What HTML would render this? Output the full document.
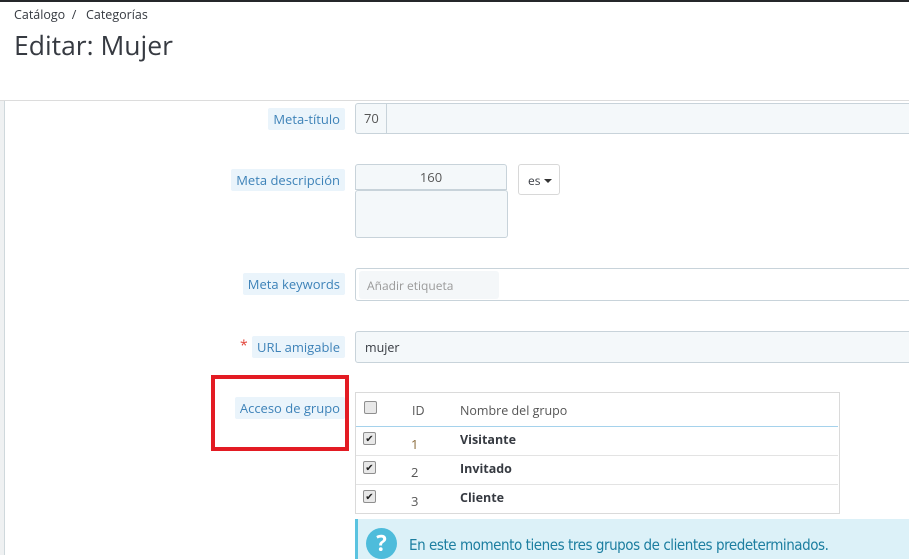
<!DOCTYPE html>
<html><head><meta charset="utf-8"><style>
*{box-sizing:border-box;margin:0;padding:0}
body{width:909px;height:555px;overflow:hidden;background:#fff;font-family:"Open Sans","Liberation Sans","DejaVu Sans",sans-serif;color:#363a41;position:relative;font-size:13px}
.a{position:absolute}
.lbl{position:absolute;right:564px;background:#eaf4fb;color:#3d82b8;font-size:13px;padding:2px 5px;border-radius:2px;white-space:nowrap}
.inp{position:absolute;background:#f4f8fa;border:1px solid #c8d3da;border-radius:3px}
.ck{position:absolute;width:13px;height:13px;border:1px solid #8f8f8f;border-radius:2px;background:#e8e8e8;font-size:10px;line-height:11px;text-align:center;color:#222}
.row{position:absolute;left:0;width:482px;border-top:1px solid #e3e3e3;height:29px}
</style></head><body>
<div class="a" style="left:0;top:0;width:909px;height:2px;background:#25272a"></div>
<div class="a" style="left:14px;top:6px;font-size:12.5px;color:#363a41">Catálogo &nbsp;/&nbsp;&nbsp; Categorías</div>
<div class="a" style="left:14px;top:27px;font-size:26.5px;color:#363a41">Editar: Mujer</div>
<div class="a" style="left:0;top:100px;width:909px;height:1px;background:#dcdcdc"></div>
<div class="a" style="left:0;top:101px;width:4px;height:454px;background:#eff1f2"></div>
<div class="a" style="left:4px;top:101px;width:1px;height:454px;background:#cfd8dc"></div>

<div class="lbl" style="top:108px">Meta-título</div>
<div class="inp" style="left:355px;top:103px;width:560px;height:31px"></div>
<div class="a" style="left:386px;top:104px;width:1px;height:29px;background:#c8d3da"></div>
<div class="a" style="left:364px;top:109px;color:#555">70</div>

<div class="lbl" style="top:169px">Meta descripción</div>
<div class="inp" style="left:355px;top:164px;width:152px;height:26px;border-radius:3px 3px 0 0"></div>
<div class="a" style="left:355px;top:168px;width:152px;text-align:center;color:#555">160</div>
<div class="inp" style="left:355px;top:190px;width:153px;height:48px"></div>
<div class="a" style="left:518px;top:164px;width:42px;height:31px;border:1px solid #d8d8d8;border-radius:3px;background:#fff;font-size:12px;padding:7px 0 0 9px">es <span style="display:inline-block;border-left:4px solid transparent;border-right:4px solid transparent;border-top:4px solid #333;vertical-align:2px"></span></div>

<div class="lbl" style="top:273px">Meta keywords</div>
<div class="inp" style="left:355px;top:268px;width:560px;height:33px;background:#fff"></div>
<div class="a" style="left:359px;top:271px;width:140px;height:28px;background:#f4f7f9;border-radius:3px;color:#999;font-size:12px;padding:6px 0 0 8px">Añadir etiqueta</div>

<div class="a" style="left:240px;top:336px;color:#e2443a;font-size:14px">*</div>
<div class="lbl" style="top:336px">URL amigable</div>
<div class="inp" style="left:355px;top:331px;width:560px;height:32px"></div>
<div class="a" style="left:365px;top:339px;font-size:12.5px;color:#363a41">mujer</div>

<div class="a" style="left:211px;top:375px;width:138px;height:76px;border:4px solid #e31b23"></div>
<div class="lbl" style="top:397px">Acceso de grupo</div>

<div class="a" style="left:355px;top:392px;width:485px;height:122px;border:1px solid #dadada;background:#fff">
 <div class="ck" style="left:8px;top:8px"></div>
 <div class="a" style="left:56px;top:9px;font-size:12.5px;color:#555">ID</div>
 <div class="a" style="left:104px;top:9px;font-size:12.5px;color:#555">Nombre del grupo</div>
 <div class="row" style="top:33px;border-top:1px solid #a5d2ec"><div class="ck" style="left:7px;top:5px">✔</div><div class="a" style="left:55px;top:8px;color:#8a6a3a">1</div><div class="a" style="left:104px;top:4px;font-weight:bold;font-size:12.5px">Visitante</div></div>
 <div class="row" style="top:62px"><div class="ck" style="left:7px;top:5px">✔</div><div class="a" style="left:55px;top:7px;color:#555">2</div><div class="a" style="left:104px;top:4px;font-weight:bold;font-size:12.5px">Invitado</div></div>
 <div class="row" style="top:91px"><div class="ck" style="left:7px;top:5px">✔</div><div class="a" style="left:55px;top:7px;color:#555">3</div><div class="a" style="left:104px;top:4px;font-weight:bold;font-size:12.5px">Cliente</div></div>
</div>

<div class="a" style="left:355px;top:519px;width:560px;height:40px;background:#dcf1f8;border-left:3px solid #5ac3e0"></div>
<div class="a" style="left:366px;top:528px;width:31px;height:31px;border-radius:50%;background:#4ebcdb;color:#fff;font-weight:bold;font-size:22px;text-align:center;line-height:31px">?</div>
<div class="a" style="left:409px;top:536px;font-size:15px;letter-spacing:-0.45px;color:#1c7ea0;font-family:'DejaVu Sans Condensed','Liberation Sans Narrow',sans-serif">En este momento tienes tres grupos de clientes predeterminados.</div>
</body></html>
